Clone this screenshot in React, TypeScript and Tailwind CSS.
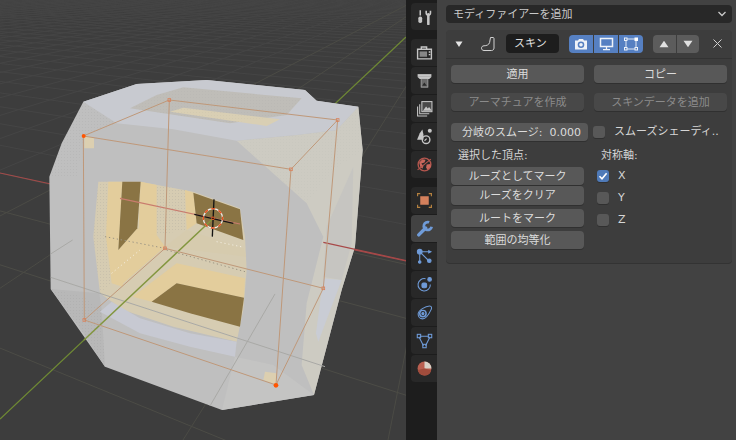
import React from 'react';

// floor grid of the viewport: two vanishing points, lines spaced evenly in plane space
const floorA = Array.from({ length: 70 }, (_, i) => {
  const y0 = 1 / (0.00467 + 0.0007 * (i - 4)) - 41;
  return { x1: 0, y1: y0, x2: 406, y2: y0 + ((y0 + 41) / 952) * 406 };
});
const floorB = Array.from({ length: 90 }, (_, i) => {
  const x = -22 + 205 * (i - 78);
  return { x1: x, y1: 440, x2: 482 + (x - 482) * (34 / 474), y2: 0 };
});

const cage = [
  [130, 198, 388, 90], [388, 90, 893, 150], [893, 150, 753, 298], [753, 298, 130, 198],
  [133, 750, 375, 535], [375, 535, 850, 655], [850, 655, 708, 945], [708, 945, 133, 750],
  [130, 198, 133, 750], [388, 90, 375, 535], [893, 150, 850, 655], [753, 298, 708, 945],
];

function Viewport() {
  return (
    <div className="w-[406px] h-[440px] shrink-0 bg-[#3d3d3d]">
      <svg width="406" height="440" viewBox="0 0 406 440" className="block">
        <defs>
          <pattern id="stipple" width="9" height="9" patternUnits="userSpaceOnUse">
            <rect width="3" height="3" fill="#8f8f8f" />
          </pattern>
        </defs>
        {floorA.map((l, i) => <line key={i} {...l} stroke={l.y1 > 170 ? '#4c4c46' : '#454545'} strokeWidth="1" />)}
        {floorB.map((l, i) => <line key={i} {...l} stroke={i >= 76 ? '#4b4b45' : '#454545'} strokeWidth="1" />)}
        <line x1="0" y1="173" x2="406" y2="261" stroke="#a34a4a" strokeWidth="1.2" />
        <line x1="0" y1="419" x2="406" y2="37" stroke="#6f8a33" strokeWidth="1.2" />
        <g transform="translate(40 70) scale(0.3333)">
          <polygon points="130,95 290,42 500,30 795,60 830,92 955,110 968,240 945,530 905,660 822,975 546,1020 195,890 32,657 28,320 65,220" fill="#bfbfbf" />
          {/* side shading */}
          <polygon points="590,212 770,195 890,180 955,110 968,240 945,530 905,660 822,975 785,885 800,700 850,500 800,400" fill="#cdcbc2" />
          <polygon points="940,290 860,470 850,620 905,630 935,520" fill="#c6c5c1" />
          <polygon points="850,625 905,630 835,815 828,790" fill="#c9ccd4" />
          <polygon points="32,657 130,790 195,890 185,720 178,670" fill="#b8b8b8" />
          <polygon points="546,1020 585,860 700,885 822,975" fill="#c4c4c3" />
          {/* top band */}
          <polygon points="130,95 290,42 500,30 795,60 830,92 955,110 890,180 770,195 590,212 400,178 230,160" fill="#c8cad0" />
          <polygon points="270,115 350,75 430,52 785,85 740,135 570,160" fill="#bfbdb8" />
          <polygon points="390,125 430,113 720,148 680,168" fill="#d9cfb4" />
          {/* window */}
          <polygon points="175,335 300,335 460,365 600,415 615,500 620,600 610,720 590,815 400,770 250,720 180,670 160,500" fill="#d6ccb2" />
          <polygon points="205,335 247,335 235,540 292,475 350,495 375,530 250,640 248,650 215,640 198,500" fill="#e3cd9c" />
          <polygon points="302,335 350,345 350,495 295,490" fill="#e3cd9c" />
          <polygon points="435,360 460,368 470,460 440,480" fill="#e3cd9c" />
          <polygon points="375,530 440,480 612,535 618,560" fill="#d6cbae" />
          <polygon points="278,680 410,580 615,625 612,683 410,640 335,695" fill="#e3cd9c" />
          <polygon points="247,335 302,335 292,475 235,540" fill="#8a7444" />
          <polygon points="460,368 600,418 610,510 470,460" fill="#8a7444" />
          <polygon points="410,640 612,683 600,770 450,730 335,695" fill="#8a7444" />
          <polygon points="180,725 215,695 300,745 450,790 590,815 585,860 450,830 300,790" fill="#c7c9d2" />
          <polygon points="133,195 162,205 162,235 133,235" fill="#dccfb0" />
          <polygon points="675,905 710,910 710,945 670,930" fill="#dccfb0" />
          {/* dithered alpha on the faces */}
          <polygon points="130,95 65,220 28,320 110,320 130,200 230,160" fill="url(#stipple)" opacity="0.15" />
          <polygon points="32,657 130,790 195,890 185,720 130,680" fill="url(#stipple)" opacity="0.18" />
          <polygon points="175,335 205,335 198,500 215,640 180,670 160,500" fill="url(#stipple)" opacity="0.18" />
          <polygon points="350,345 435,360 440,480 350,495" fill="url(#stipple)" opacity="0.2" />
          <polygon points="590,212 770,195 890,180 955,110 968,240 880,300 800,400" fill="url(#stipple)" opacity="0.06" />
          <polygon points="270,115 350,75 430,52 785,85 740,135 570,160" fill="url(#stipple)" opacity="0.08" />
          {/* hidden edges and floor lines seen through the mesh */}
          <line x1="195" y1="500" x2="375" y2="535" stroke="#9a9484" strokeWidth="3" strokeDasharray="4 8" />
          <line x1="380" y1="540" x2="615" y2="605" stroke="#9a9484" strokeWidth="3" strokeDasharray="4 8" />
          <line x1="215" y1="610" x2="300" y2="540" stroke="#f5f2e8" strokeWidth="3" strokeDasharray="3 9" />
          <line x1="530" y1="515" x2="612" y2="532" stroke="#f5f2e8" strokeWidth="3" strokeDasharray="3 9" />
          <line x1="32" y1="622" x2="855" y2="890" stroke="#a9a9a6" strokeWidth="3" />
          <line x1="32" y1="552" x2="98" y2="510" stroke="#a9a9a6" strokeWidth="3" />
          <line x1="705" y1="672" x2="510" y2="1008" stroke="#a9a9a6" strokeWidth="3" />
          <line x1="240" y1="385" x2="600" y2="462" stroke="#c97c6e" strokeWidth="3.5" />
          <line x1="850" y1="517" x2="1100" y2="572" stroke="#a84848" strokeWidth="3.5" />
          <line x1="132" y1="810" x2="520" y2="445" stroke="#82963e" strokeWidth="4.5" />
          {/* cage of the skin modifier */}
          {cage.map((c, i) => (
            <line key={i} x1={c[0]} y1={c[1]} x2={c[2]} y2={c[3]} stroke="#bf9878" strokeWidth="3" />
          ))}
          {[[388, 90], [893, 150], [753, 298], [133, 750], [375, 535], [850, 655]].map((p, i) => (
            <rect key={i} x={p[0] - 4} y={p[1] - 4} width="8" height="8" fill="none" stroke="#d9805a" strokeWidth="2.5" />
          ))}
          <circle cx="131" cy="198" r="6" fill="#ff5500" />
          <circle cx="708" cy="946" r="7" fill="#ff5500" />
          {/* 3d cursor */}
          <line x1="463" y1="433" x2="580" y2="460" stroke="#141414" strokeWidth="4" />
          <line x1="522" y1="388" x2="517" y2="500" stroke="#141414" strokeWidth="4" />
          <circle cx="519" cy="445" r="29" fill="none" stroke="#f0f0f0" strokeWidth="4" />
          <circle cx="519" cy="445" r="29" fill="none" stroke="#e8501e" strokeWidth="4" strokeDasharray="12 10.75" strokeDashoffset="6" />
          <circle cx="519" cy="445" r="4" fill="none" stroke="#e8501e" strokeWidth="3" />
        </g>
      </svg>
    </div>
  );
}

const grey = '#c6c6c6';
const blue = '#6f9bd8';

const tabIcons: React.ReactNode[] = [
  // tools
  <g key="t" transform="translate(0 1)">
    <path d="M4 1v5" stroke={grey} strokeWidth="1.4" />
    <rect x="2.2" y="7" width="3.6" height="6" rx="1.6" fill={grey} />
    <path d="M9.6 1.5v2.2c0 1 .9 1.9 2 1.9s2-.9 2-1.9V1.5" stroke={grey} strokeWidth="1.5" fill="none" />
    <path d="M11.6 5v9" stroke={grey} strokeWidth="2.4" strokeLinecap="round" />
  </g>,
  // render
  <g key="r" fill="none" stroke={grey} strokeWidth="1.3">
    <path d="M1.5 5h13v9h-13z" />
    <path d="M5 5V2.8h5V5" />
    <rect x="3.4" y="7" width="7" height="5" fill={grey} stroke="none" opacity="0.6" />
    <path d="M12 7.5h1.5M12 10h1.5" />
  </g>,
  // output
  <g key="o">
    <path d="M1.5 2h13v2.6h-13z" fill={grey} />
    <path d="M1.5 4.6l2 2h1v8h7v-8h1l2-2z" fill={grey} />
    <rect x="5" y="6.5" width="6" height="7.5" fill="#6b6b6b" />
    <path d="M5.8 13l2-3.2 2.4 3.2z" fill="#2a2a2a" />
  </g>,
  // view layer
  <g key="v" fill="none" stroke={grey} strokeWidth="1">
    <rect x="5.5" y="1.5" width="9.5" height="9.5" fill="#4a4a4a" />
    <path d="M6.5 10l3-4 1.6 2 1.2-1.4L15 10z" fill={grey} stroke="none" />
    <path d="M3.5 4v9h9M1.5 6v9h9" />
  </g>,
  // scene
  <g key="s">
    <path d="M3.5 5L6 1.5 7 6v5H1z" fill={grey} />
    <circle cx="13" cy="2.5" r="1.9" fill={grey} />
    <circle cx="9.5" cy="11" r="3.6" fill="none" stroke={grey} strokeWidth="1.3" />
    <path d="M8 12l2-2" stroke={grey} strokeWidth="1" />
  </g>,
  // world
  <g key="w">
    <circle cx="8" cy="8" r="6" fill="none" stroke="#b5564e" strokeWidth="1.3" />
    <path d="M3 6l3-3 3 .5-1 2.5-3 1 2 2.5-1 2.5-2-2zM10 8l3.5-.5.5 2.5-3 3-1.5-2z" fill="#c9675c" />
    <path d="M1.5 13L14 3" stroke="#b5564e" strokeWidth="1" />
  </g>,
  // object
  <g key="ob">
    <rect x="4" y="4" width="8" height="8" fill="#d4805c" />
    <path d="M1.5 4V1.5H4M12 1.5h2.5V4M14.5 12v2.5H12M4 14.5H1.5V12" fill="none" stroke="#b5813f" strokeWidth="1.1" />
  </g>,
  // modifiers
  <g key="m" fill="none" stroke={blue}>
    <path d="M2.6 14L9 7.6" strokeWidth="3.2" strokeLinecap="round" />
    <path d="M12.4 2.2A3.7 3.7 0 1 0 14.7 6.3" strokeWidth="2.6" />
  </g>,
  // particles
  <g key="p" stroke={blue} strokeWidth="1" fill={blue}>
    <path d="M3.5 3.5H13M3.5 3.5l8.5 8.5M3.5 3.5V13" fill="none" />
    <circle cx="3.5" cy="3.5" r="2.2" />
    <path d="M12 2.5l2 1-2 1z" />
    <circle cx="12.5" cy="12" r="1.7" />
    <circle cx="3.5" cy="13.2" r="1.2" />
  </g>,
  // physics
  <g key="ph" fill="none" stroke={blue} strokeWidth="1">
    <path d="M9 2.6A5.8 5.8 0 1 0 13.5 8" />
    <rect x="5.6" y="6.6" width="4.4" height="4.4" rx="1.4" fill={blue} />
    <circle cx="12.8" cy="3.2" r="1.7" fill={blue} />
  </g>,
  // constraints
  <g key="c" fill="none" stroke={blue} strokeWidth="1">
    <path d="M2 9.5C2 6 9 1.8 12.8 1.8c2 0 2.2 2 1.4 3.5-1.4 3-4.8 8.7-8 8.7-2.5 0-4.2-2-4.2-4.5z" />
    <circle cx="6.5" cy="9" r="3" strokeWidth="1.4" />
    <circle cx="6.5" cy="9" r="1" fill={blue} />
  </g>,
  // data
  <g key="d" fill="none" stroke={blue} strokeWidth="1">
    <path d="M3.5 4h9M3 5l4 8M13 5l-4 8" />
    <rect x="1.2" y="2.2" width="3.2" height="3.2" />
    <rect x="11.6" y="2.2" width="3.2" height="3.2" />
    <rect x="6.4" y="11.6" width="3.2" height="3.2" />
  </g>,
  // material
  <g key="ma">
    <circle cx="8" cy="8" r="6.5" fill="#b95f50" />
    <path d="M8 1.5A6.500 6.500 0 0 1 14.500 8L8 8z" fill="#d8d2c8" />
    <path d="M1.6 9.500L8 8l6.300 1.600A6.500 6.500 0 0 1 8 14.500 6.500 6.500 0 0 1 1.600 9.500z" fill="#a04c3c" />
  </g>,
];

function Tab({ index, active }: { index: number; active?: boolean }) {
  return (
    <div className={`w-[26px] h-[27px] mb-[1px] rounded-l-[4px] flex items-center justify-center ${active ? 'bg-[#424242]' : 'bg-[#282828]'}`}>
      <svg width="17" height="17" viewBox="0 0 16 16">{tabIcons[index]}</svg>
    </div>
  );
}

function TabStrip() {
  return (
    <div className="w-[31px] h-[440px] shrink-0 bg-[#1d1d1d] pl-[5px] pt-[3px] flex flex-col">
      <Tab index={0} />
      <div className="h-[8px]" />
      {[1, 2, 3, 4, 5].map(i => <Tab key={i} index={i} />)}
      <div className="h-[8px]" />
      {[6, 7, 8, 9, 10, 11, 12].map(i => <Tab key={i} index={i} active={i === 7} />)}
    </div>
  );
}

function Btn({ label, disabled, className = '' }: { label: string; disabled?: boolean; className?: string }) {
  return (
    <div className={`h-[18px] rounded-[4px] flex items-center justify-center text-[11px] leading-none shadow-[0_1px_0_#303030] ${disabled ? 'bg-[#484848] text-[#8b8b8b]' : 'bg-[#585858] text-[#dcdcdc]'} ${className}`}>
      {label}
    </div>
  );
}

function Check({ label, checked }: { label: string; checked?: boolean }) {
  return (
    <div className="h-[22px] flex items-center pl-[3px] text-[11px] text-[#d6d6d6]">
      <div className={`w-[12px] h-[12px] rounded-[3px] flex items-center justify-center shadow-[0_1px_0_#303030] ${checked ? 'bg-[#4f7ab8]' : 'bg-[#585858]'}`}>
        {checked && (
          <svg width="10" height="10" viewBox="0 0 10 10">
            <path d="M1.5 5.2L4 7.8 8.6 2.2" fill="none" stroke="#ffffff" strokeWidth="1.6" />
          </svg>
        )}
      </div>
      <span className="ml-[9px]">{label}</span>
    </div>
  );
}

function ModifierHeader() {
  return (
    <div className="h-[29px] border-b border-[#333333] flex items-center pl-[10px] pb-[1px]">
      <svg width="8" height="8" viewBox="0 0 8 8" className="ml-[-1px]"><path d="M.5 1.5h7L4 7z" fill="#e6e6e6" /></svg>
      <svg width="16" height="16" viewBox="0 0 16 16" className="ml-[17px]">
        <path d="M10.5 1.5h2.5c.6 0 1 .4 1 1V12c0 1.4-1 2.5-2.4 2.5H4C2.5 14.500 1.500 13.500 1.500 12.200 1.500 10.800 2.500 9.800 4 9.800c2.500 0 5-1 5.600-3.300z" fill="none" stroke="#d2d2d2" strokeWidth="1" />
      </svg>
      <div className="w-[53px] h-[19px] ml-[10px] rounded-[4px] bg-[#1d1d1d] text-[#e0e0e0] text-[11px] leading-none flex items-center pl-[8px]">スキン</div>
      <div className="ml-[10px] w-[74px] h-[18px] rounded-[4px] overflow-hidden flex gap-[1px] bg-[#3d3d3d]">
        <div className="flex-1 bg-[#5680c2] flex items-center justify-center">
          <svg width="14" height="14" viewBox="0 0 14 14">
            <path d="M1 3.500h3L5 2h4l1 1.500h3v9H1z" fill="#eef2f8" />
            <circle cx="7" cy="7.800" r="3.300" fill="#5680c2" />
            <circle cx="7" cy="7.800" r="1.800" fill="#eef2f8" />
          </svg>
        </div>
        <div className="flex-1 bg-[#5680c2] flex items-center justify-center">
          <svg width="15" height="14" viewBox="0 0 15 14">
            <rect x="1.500" y="1.500" width="12" height="8" fill="#5680c2" stroke="#eef2f8" strokeWidth="1.500" />
            <path d="M7.500 10v2.500M4 12.700h7" stroke="#eef2f8" strokeWidth="1.300" />
          </svg>
        </div>
        <div className="flex-1 bg-[#5680c2] flex items-center justify-center">
          <svg width="16" height="14" viewBox="0 0 16 14">
            <path d="M4 2h8M3 4v6M13 4v6M4 12h8" stroke="#dfe7f3" strokeWidth="1" />
            <rect x="1.500" y="1" width="2.500" height="2.500" fill="none" stroke="#eef2f8" />
            <rect x="1.500" y="10.500" width="2.500" height="2.500" fill="none" stroke="#eef2f8" />
            <rect x="12" y="10.500" width="2.500" height="2.500" fill="none" stroke="#eef2f8" />
            <rect x="11.500" y="0.500" width="3.500" height="3.500" fill="#ffffff" />
          </svg>
        </div>
      </div>
      <div className="ml-[10px] w-[46px] h-[18px] rounded-[4px] overflow-hidden flex gap-[1px] bg-[#3d3d3d]">
        <div className="flex-1 bg-[#5c5c5c] flex items-center justify-center">
          <svg width="10" height="8" viewBox="0 0 10 8"><path d="M5 .8l4.500 6.400H.5z" fill="#e0e0e0" /></svg>
        </div>
        <div className="flex-1 bg-[#5c5c5c] flex items-center justify-center">
          <svg width="10" height="8" viewBox="0 0 10 8"><path d="M5 7.200L.5.800h9z" fill="#e0e0e0" /></svg>
        </div>
      </div>
      <svg width="11" height="11" viewBox="0 0 11 11" className="ml-[13px]">
        <path d="M1.500 1.500l8 8M9.500 1.500l-8 8" stroke="#cfcfcf" strokeWidth="1" />
      </svg>
    </div>
  );
}

function PropertiesPanel() {
  return (
    <div className="flex-1 h-[440px] bg-[#424242] pl-[9px] pr-[4px] pt-[5px]">
      <div className="h-[18px] rounded-[4px] bg-[#282828] text-[#c9c9c9] text-[11px] leading-none flex items-center justify-between pl-[7px] pr-[5px]">
        <span>モディファイアーを追加</span>
        <svg width="10" height="8" viewBox="0 0 10 8"><path d="M1.500 2l3.500 3.500L8.500 2" fill="none" stroke="#c9c9c9" strokeWidth="1.300" /></svg>
      </div>
      <div className="mt-[7px] h-[233px] rounded-[4px] bg-[#3d3d3d] shadow-[0_1px_0_#333333]">
        <ModifierHeader />
        <div className="px-[5px] pt-[6px]">
          <div className="grid grid-cols-2 gap-x-[10px] gap-y-[10px]">
            <Btn label="適用" />
            <Btn label="コピー" />
            <Btn label="アーマチュアを作成" disabled />
            <Btn label="スキンデータを追加" disabled />
          </div>
          <div className="mt-[12px] flex items-center">
            <div className="w-[137px] h-[18px] rounded-[4px] bg-[#585858] text-[#dcdcdc] text-[11px] leading-none flex items-center justify-between pl-[11px] pr-[7px] shadow-[0_1px_0_#303030]">
              <span>分岐のスムージ:</span>
              <span>0.000</span>
            </div>
            <div className="ml-[5px] w-[12px] h-[12px] rounded-[3px] bg-[#585858] shadow-[0_1px_0_#303030]" />
            <span className="ml-[9px] text-[11px] text-[#d6d6d6] whitespace-nowrap">スムーズシェーディ..</span>
          </div>
          <div className="mt-[6px] grid grid-cols-2 gap-x-[10px] text-[11px] leading-none text-[#d6d6d6]">
            <div className="h-[16px] flex items-center pl-[7px]">選択した頂点:</div>
            <div className="h-[16px] flex items-center pl-[7px]">対称軸:</div>
          </div>
          <div className="mt-[4px] grid grid-cols-2 gap-x-[10px]">
            <div className="flex flex-col">
              <Btn label="ルーズとしてマーク" />
              <Btn label="ルーズをクリア" className="mt-[1px] h-[19px]" />
              <Btn label="ルートをマーク" className="mt-[4px]" />
              <Btn label="範囲の均等化" className="mt-[4px]" />
            </div>
            <div className="flex flex-col mt-[-2px]">
              <Check label="X" checked />
              <Check label="Y" />
              <Check label="Z" />
            </div>
          </div>
        </div>
      </div>
    </div>
  );
}

export default function App() {
  return (
    <div className="w-[736px] h-[440px] overflow-hidden flex font-['DejaVu_Sans','Noto_Sans_CJK_JP',sans-serif]">
      <Viewport />
      <TabStrip />
      <PropertiesPanel />
    </div>
  );
}
